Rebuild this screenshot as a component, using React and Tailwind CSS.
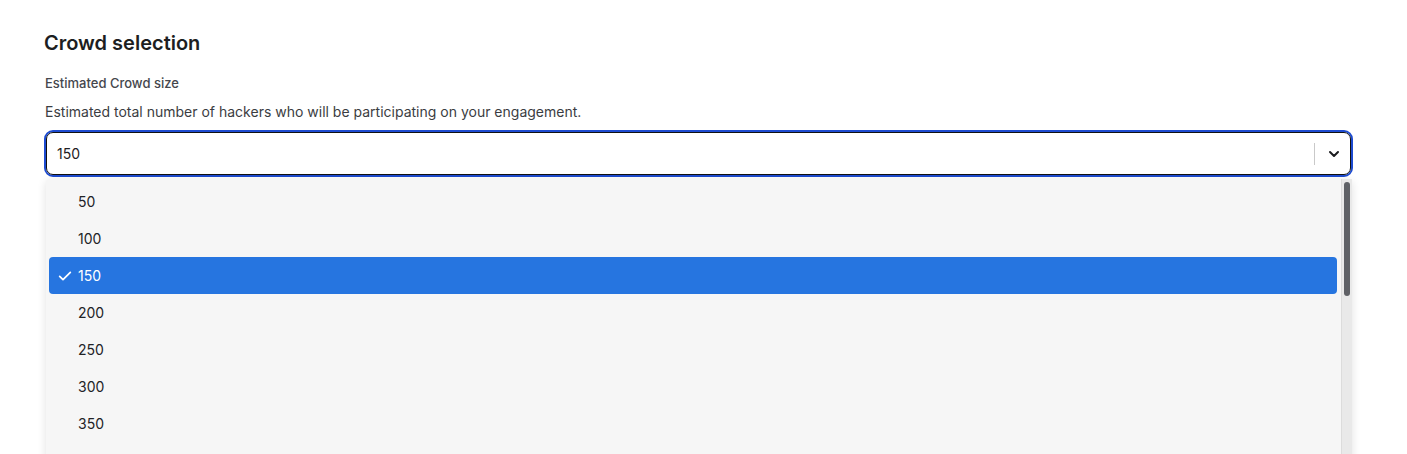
import React from "react";

const options = ["50", "100", "150", "200", "250", "300", "350"];

export default function App() {
  return (
    <div
      className="h-[454px] overflow-hidden bg-white pl-[44px] pr-[54px] pt-[30px] text-[#1f2023]"
      style={{ fontFamily: "Inter, 'Noto Sans', sans-serif" }}
    >
      <h2 className="text-[20px] font-semibold leading-[26px] text-[#1d1e21]">Crowd selection</h2>
      <div className="mt-[17px] pl-px text-[13px] font-medium leading-[20px] text-[#45474d]">Estimated Crowd size</div>
      <div className="mt-[9px] pl-px text-[14px] leading-[20px] text-[#3b3d42]">
        Estimated total number of hackers who will be participating on your engagement.
      </div>
      <div className="relative mt-[8px]">
        <div className="flex h-[47px] items-center rounded-[9px] border-2 border-[#1d4bd0] bg-white">
          <div className="flex h-full flex-1 items-center rounded-[7px] border border-[#111] pl-[10px] pr-[8px]">
            <span className="flex-1 text-[14px] text-[#1f2023]">150</span>
            <div className="h-[22px] w-px bg-[#c9c9c9]" />
            <svg className="ml-[11px]" width="16" height="16" viewBox="0 0 24 24" fill="none" stroke="#1b1c1f" strokeWidth="3" strokeLinecap="round" strokeLinejoin="round">
              <path d="M6 9l6 6 6-6" />
            </svg>
          </div>
        </div>
        <div className="absolute left-[2px] right-[1px] top-[49px] flex h-[300px] rounded-[4px] bg-[#f6f6f6] shadow-[0_2px_10px_rgba(0,0,0,0.12)]">
          <div className="flex-1 pl-[3px] pr-[4px] pt-[4px]">
            {options.map((o) => {
              const sel = o === "150";
              return (
                <div
                  key={o}
                  className={
                    sel
                      ? "flex h-[37px] items-center rounded-[4px] bg-[#2675e0] pl-[8px] text-[14px] text-white"
                      : "flex h-[37px] items-center pl-[29px] text-[14px] text-[#222327]"
                  }
                >
                  {sel && (
                    <svg className="mr-[5px]" width="16" height="16" viewBox="0 0 24 24" fill="none" stroke="white" strokeWidth="2.6" strokeLinecap="round" strokeLinejoin="round">
                      <path d="M4 12.5l5 5L20 6.5" />
                    </svg>
                  )}
                  {o}
                </div>
              );
            })}
          </div>
          <div className="w-[11px] border-l border-[#dcdcdc] bg-[#e9e9e9] pl-[2px] pt-[3px]">
            <div className="h-[114px] w-[6px] rounded-full bg-[#5f6166]" />
          </div>
        </div>
      </div>
    </div>
  );
}
